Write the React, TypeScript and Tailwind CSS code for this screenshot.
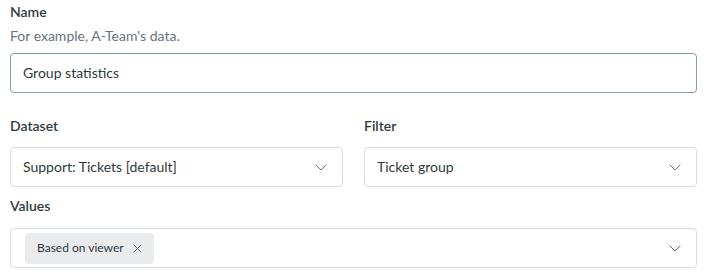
import React from 'react';

const Chevron: React.FC = () => (
  <svg width="12" height="12" viewBox="0 0 12 12" fill="none" className="shrink-0">
    <path d="M1 4l5 5 5-5" stroke="#68737d" strokeWidth="1" strokeLinecap="round" strokeLinejoin="round" />
  </svg>
);

const Select: React.FC<{ value: string }> = ({ value }) => (
  <div className="h-[40px] mt-[11px] border border-[#d8dcde] rounded-[4px] flex items-center justify-between pl-3 pr-[15px] text-[14px] text-[#2f3941]">
    <span>{value}</span>
    <Chevron />
  </div>
);

export default function App(): React.ReactElement {
  return (
    <div className="pl-[10px] pr-[14px] w-[711px] bg-white leading-[20px] text-[#2f3941]" style={{ fontFamily: 'Lato, sans-serif' }}>
      <div className="pt-[2px] text-[14px] font-semibold">Name</div>
      <div className="mt-[4px] text-[14px] text-[#68737d]">For example, A-Team's data.</div>
      <div className="mt-[7px] h-[40px] border border-[#7d9db3] rounded-[4px] flex items-center px-3 text-[14px]">
        Group statistics
      </div>

      <div className="grid grid-cols-2 gap-[21px] mt-[23px]">
        <div>
          <div className="text-[14px] font-semibold">Dataset</div>
          <Select value="Support: Tickets [default]" />
        </div>
        <div>
          <div className="text-[14px] font-semibold">Filter</div>
          <Select value="Ticket group" />
        </div>
      </div>

      <div className="mt-[9px] text-[14px] font-semibold">Values</div>
      <div className="mt-[12px] h-[40px] border border-[#d8dcde] rounded-[4px] flex items-center justify-between pl-[14px] pr-[15px]">
        <div className="h-[31px] bg-[#e9ebed] rounded-[4px] flex items-center pl-3 pr-3 gap-[9px] text-[12px] text-[#2f3941]">
          <span>Based on viewer</span>
          <svg width="9" height="9" viewBox="0 0 9 9" fill="none">
            <path d="M1 1l7 7M8 1l-7 7" stroke="#68737d" strokeWidth="1" strokeLinecap="round" />
          </svg>
        </div>
        <Chevron />
      </div>
    </div>
  );
}
